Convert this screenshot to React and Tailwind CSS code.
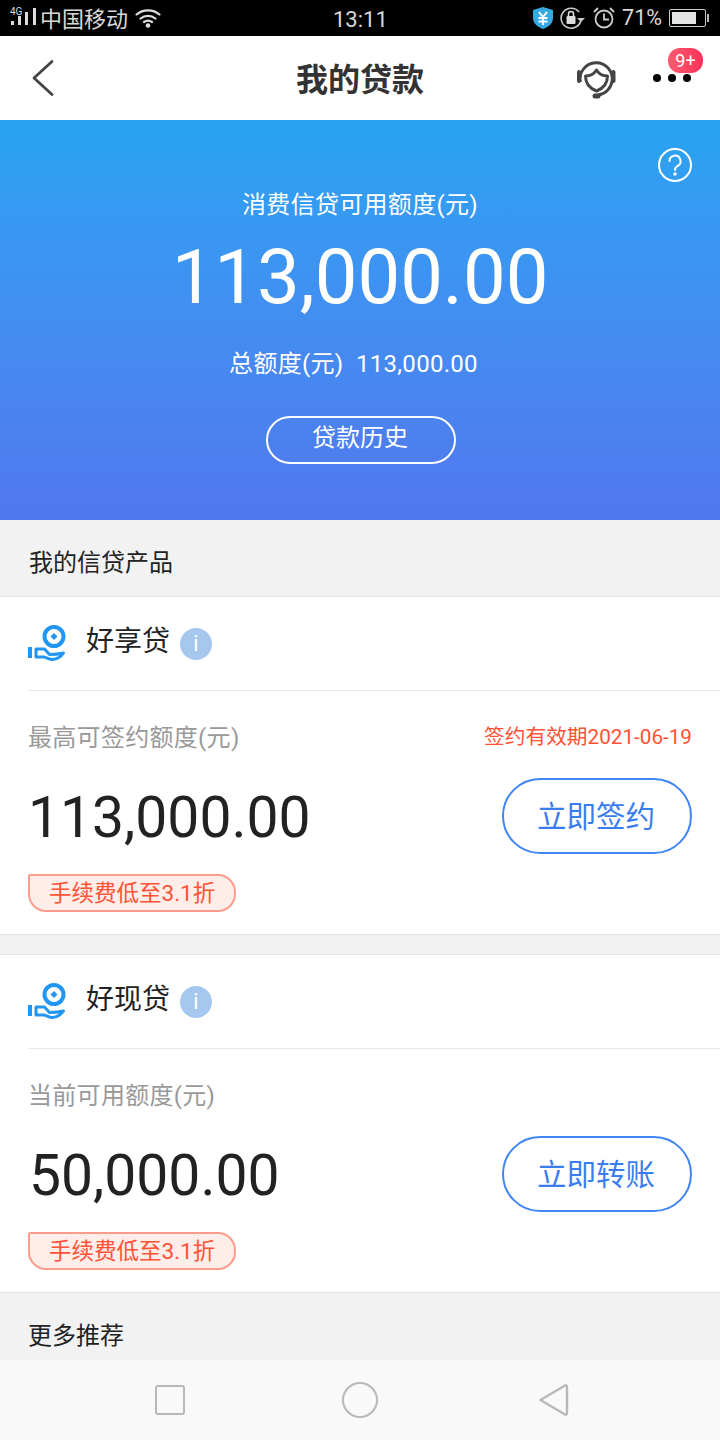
function CoinHand() {
  return (
    <svg width="38" height="40" viewBox="0 0 38 40" fill="none">
      <circle cx="26" cy="12.500" r="9.500" stroke="#2196f3" strokeWidth="4" />
      <path d="M26 9l3.500 3.500-3.500 3.500-3.500-3.500z" fill="#2196f3" />
      <rect x="0" y="23" width="4" height="11" fill="#2196f3" />
      <path d="M8 25h8.500l5 5.500c5 0 10-.5 14-1.500-2 3-6 6-11 6.500-3 0-6-2-8.500-2.500H8z" stroke="#2196f3" strokeWidth="3" strokeLinejoin="round" />
    </svg>
  );
}

function InfoDot() {
  return (
    <span className="w-8 h-8 rounded-full bg-[#a6c8ee] text-white flex items-center justify-center text-[22px] leading-none">i</span>
  );
}

function Tag() {
  return (
    <div className="w-[208px] h-[38px] border-2 border-[#ff9c8c] bg-[#ffedea] rounded-tl-[2px] rounded-bl-[18px] rounded-r-[18px] text-[#ff5236] text-[22.500px] leading-[34px] pl-[19px]">
      手续费低至3.1折
    </div>
  );
}

function Product({ name, label, right, amount, amountClass, action }) {
  return (
    <section className="bg-white border-y border-[#e4e4e4]">
      <div className="ml-7 h-[94px] border-b border-[#e8e8e8] flex items-center">
        <CoinHand />
        <span className="ml-[20px] -mt-[3px] text-[28px] text-[#222]">{name}</span>
        <span className="ml-[10px]"><InfoDot /></span>
      </div>
      <div className="px-7 h-[243px] flex flex-col">
        <div className="flex justify-between items-center mt-[31px] h-[32px]">
          <span className="text-[24px] tracking-[0.3px] text-[#999]">{label}</span>
          {right && <span className="text-[20.700px] text-[#ff5236]">{right}</span>}
        </div>
        <div className="flex justify-between items-center mt-[24px] h-[76px]">
          <span className={`text-[57px] leading-none pt-[3px] text-[#222] ${amountClass}`}>{amount}</span>
          <button className="w-[190px] h-[76px] rounded-[38px] border-2 border-[#4285f4] text-[#3a7df0] text-[29.500px] pt-[3px] pr-[2px]">{action}</button>
        </div>
        <div className="mt-[20px]"><Tag /></div>
      </div>
    </section>
  );
}

export default function App() {
  return (
    <div className="w-[720px] h-[1440px] flex flex-col bg-[#f2f2f2] overflow-hidden font-['Roboto','Noto_Sans_CJK_SC',sans-serif]">
      {/* status bar */}
      <div className="h-9 bg-black text-[#d8d8d8] flex items-center px-[10px] relative shrink-0">
        <svg width="28" height="24" viewBox="0 0 28 24" className="mr-[2px] mt-[2px]">
          <text x="0" y="8" fontSize="10" fill="#ddd" fontFamily="Roboto">4G</text>
          <rect x="1" y="14" width="3" height="4" fill="#ddd" />
          <rect x="8" y="9" width="3" height="9" fill="#ddd" />
          <rect x="15" y="5" width="3" height="13" fill="#ddd" />
          <rect x="23" y="1" width="3" height="17" fill="#ddd" />
        </svg>
        <span className="text-[22px] mt-[3px]">中国移动</span>
        <svg width="26" height="20" viewBox="0 0 26 20" fill="none" stroke="#ddd" strokeWidth="2.200" strokeLinecap="round" className="ml-[7px]">
          <path d="M1.500 6.500C8 1 18 1 24.500 6.500M5.500 10.500C10 7 16 7 20.500 10.500M9 14c2.500-1.700 5.500-1.700 8 0" />
          <circle cx="13" cy="17.500" r="1.200" fill="#ddd" />
        </svg>
        <span className="absolute left-[333px] text-[22px] mt-[2px]">13:11</span>
        <div className="ml-auto flex items-center">
          <svg width="22" height="24" viewBox="0 0 22 24">
            <path d="M11 1l10 3v8c0 6-5 9-10 11C6 21 1 18 1 12V4z" fill="#35a9e0" />
            <path d="M7 6l4 5 4-5M6.500 12h9M6.500 15.500h9M11 11v8" stroke="#fff" strokeWidth="2" fill="none" />
          </svg>
          <svg width="28" height="24" viewBox="0 0 28 24" fill="none" className="ml-[6px]">
            <path d="M19 6a10 10 0 1 0 2 8" stroke="#ccc" strokeWidth="1.600" />
            <rect x="6.500" y="10" width="9" height="8" rx="1" fill="#ddd" />
            <path d="M8.500 10V8a2.500 2.500 0 0 1 5 0v2" stroke="#ddd" strokeWidth="1.600" />
            <path d="M17 12h8l-4 4z" fill="#ccc" />
          </svg>
          <svg width="24" height="24" viewBox="0 0 24 24" fill="none" stroke="#ccc" strokeWidth="1.800" className="ml-[4px]">
            <circle cx="12" cy="13" r="8.500" />
            <path d="M12 7.500V13.500H17M2 6l4-4M22 6l-4-4" />
          </svg>
          <span className="text-[21.500px] ml-[6px]">71%</span>
          <div className="ml-[7px] w-[37px] h-[18px] border border-[#ccc] rounded-[2px] p-[2px] flex">
            <div className="w-[24px] bg-[#e4e4e4]" />
          </div>
          <div className="w-[2px] h-[8px] bg-[#bbb] ml-[1px] mr-[1px]" />
        </div>
      </div>

      {/* nav */}
      <div className="h-[84px] bg-white flex items-center relative shrink-0">
        <svg width="26" height="40" viewBox="0 0 26 40" fill="none" stroke="#444" strokeWidth="2.800" strokeLinecap="round" strokeLinejoin="round" className="ml-[30px]">
          <path d="M22 3.500L4 20l18 16.500" />
        </svg>
        <span className="absolute left-0 right-0 text-center text-[32px] font-bold text-[#333] mt-[3px]">我的贷款</span>
        <svg width="40" height="42" viewBox="0 0 40 42" fill="none" stroke="#444" strokeWidth="2.800" className="absolute left-[576px] top-[22px]">
          <path d="M4.500 24A16 16 0 1 1 36 23A16 16 0 0 1 22 37" />
          <path d="M9.500 18c4.500 0 8.500-2 11-6 2.500 4 6.500 6 11 6 0 7-3 12-11 15-8-3-11-8-11-15z" strokeWidth="3" strokeLinejoin="round" />
          <path d="M3 14v9M37.500 14v9" strokeWidth="4" strokeLinecap="round" />
          <path d="M19 38h3" strokeWidth="5" strokeLinecap="round" />
        </svg>
        <div className="absolute left-[653px] top-[38px] flex gap-[7px]">
          <span className="w-2 h-2 rounded-full bg-black" />
          <span className="w-2 h-2 rounded-full bg-black" />
          <span className="w-2 h-2 rounded-full bg-black" />
        </div>
        <span className="absolute left-[668px] top-[12px] w-[35px] h-[25px] rounded-[12px] bg-gradient-to-r from-[#ff5a70] to-[#f9305a] text-white text-[18px] leading-[25px] text-center">9+</span>
      </div>

      {/* hero */}
      <div className="h-[400px] bg-gradient-to-b from-[#27a4f3] to-[#5177ee] text-white flex flex-col items-center relative shrink-0">
        <svg width="36" height="36" viewBox="0 0 36 36" fill="none" stroke="#fff" strokeWidth="2" className="absolute left-[657px] top-[27px]">
          <circle cx="18" cy="18" r="16" />
          <path d="M12.500 14a5.500 5.500 0 1 1 8 5c-1.800 1-2.500 2-2.500 4" strokeLinecap="round" />
          <circle cx="18" cy="27" r="0.800" fill="#fff" />
        </svg>
        <div className="mt-[67px] text-[24px] tracking-[0.3px] leading-[36px]">消费信贷可用额度(元)</div>
        <div className="text-[76px] leading-[80px] mt-[14px]">113,000.00</div>
        <div className="mt-[30px] text-[24px] tracking-[0.3px] leading-[34px] mr-[13px]">总额度(元)&nbsp; 113,000.00</div>
        <button className="mt-[35px] ml-[2px] w-[190px] h-[48px] rounded-[24px] border-2 border-white text-[24px] leading-[38px] pb-[5px] pr-[2px]">贷款历史</button>
      </div>

      <div className="h-[76px] flex items-center pl-[29px] pt-[10px] text-[24px] text-[#222] shrink-0">我的信贷产品</div>

      <Product name="好享贷" label="最高可签约额度(元)" right="签约有效期2021-06-19" amount="113,000.00" amountClass="" action="立即签约" />
      <div className="h-[19px] shrink-0" />
      <Product name="好现贷" label="当前可用额度(元)" amount="50,000.00" amountClass="ml-[1px]" action="立即转账" />

      <div className="h-[67px] pl-7 pt-[26px] text-[24px] leading-[34px] text-[#222] shrink-0">更多推荐</div>

      {/* system nav */}
      <div className="h-[80px] bg-[#f9f9f9] flex items-center shrink-0">
        <span className="ml-[155px] w-[30px] h-[30px] border-2 border-[#b8b8b8] rounded-[3px]" />
        <span className="ml-[157px] w-9 h-9 border-2 border-[#b8b8b8] rounded-full" />
        <svg width="32" height="36" viewBox="0 0 32 36" fill="none" stroke="#b8b8b8" strokeWidth="2.400" strokeLinejoin="round" className="ml-[160px]">
          <path d="M2.500 18L27 3.500c1-.5 2 0 2 1.500v26c0 1.500-1 2-2 1.500z" />
        </svg>
      </div>
    </div>
  );
}
